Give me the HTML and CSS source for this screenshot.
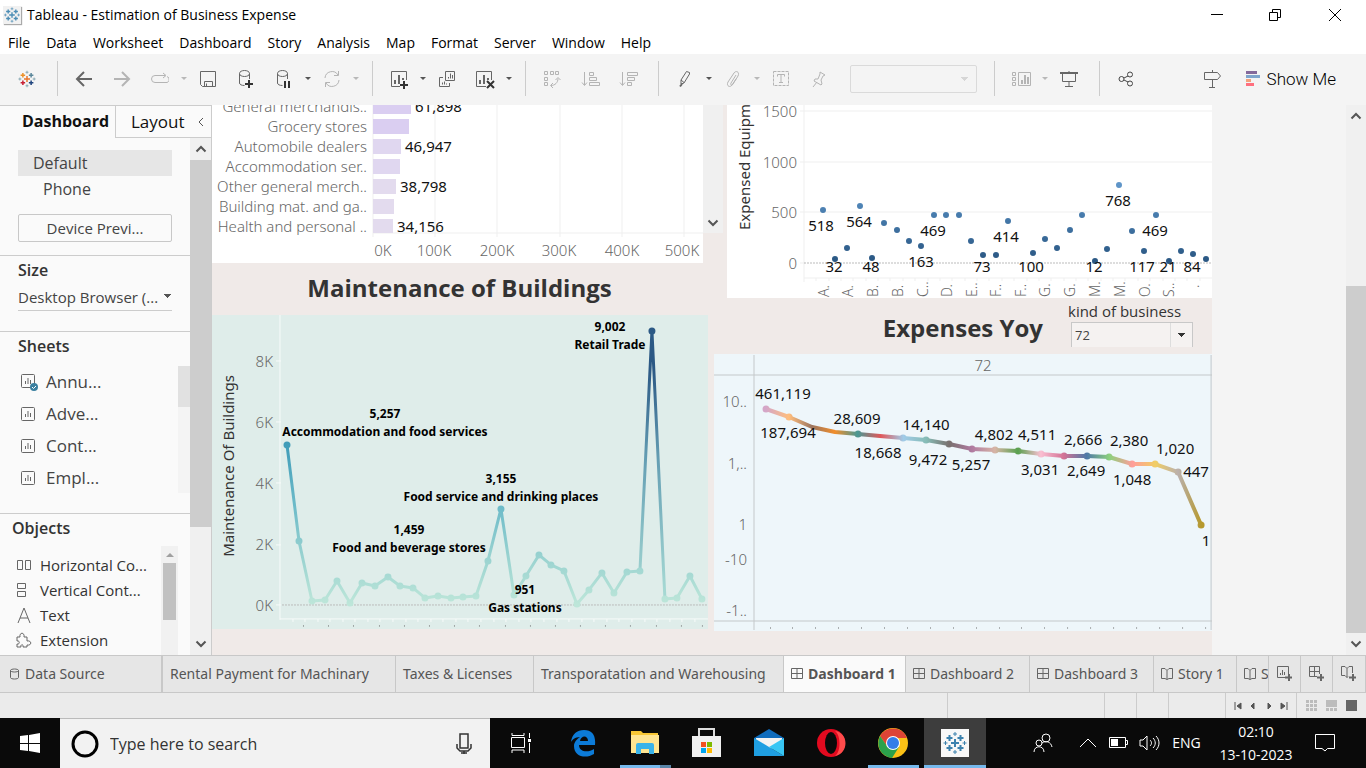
FILE: index.html
```html
<!DOCTYPE html>
<html lang="en">
<head>
<meta charset="utf-8">
<title>Tableau - Estimation of Business Expense</title>
<link rel="stylesheet" href="styles.css">
</head>
<body>
<svg class="defs" aria-hidden="true">
  <symbol id="plus-logo" viewBox="0 0 24 24">
    <path class="c1" d="M12 8v8M8 12h8"/>
    <path class="c2" d="M6.500 4v6M3.500 7h6"/>
    <path class="c3" d="M17.500 4v6M14.500 7h6"/>
    <path class="c4" d="M6.500 14v6M3.500 17h6"/>
    <path class="c5" d="M17.500 14v6M14.500 17h6"/>
    <path class="c6" d="M12 1v4M10 3h4M12 19v4M10 21h4M2.500 10v4M.5 12h4M21.500 10v4M19.500 12h4"/>
  </symbol>
  <symbol id="sheet" viewBox="0 0 14 14"><path d="M1.500.5h11a1 1 0 0 1 1 1v11a1 1 0 0 1-1 1h-11a1 1 0 0 1-1-1v-11a1 1 0 0 1 1-1zM4.500 7v3M7 4v6M9.500 6v4"/></symbol>
  <symbol id="grid" viewBox="0 0 12 12"><path d="M.5.5h11v10H.5zM6 .5v10M.5 5.500h11"/></symbol>
  <symbol id="book" viewBox="0 0 12 12"><path d="M6 2.500 4 .5H.5v10H4l2 1 2-1h3.500V.5H8zM6 2.500v9"/></symbol>
  <symbol id="up" viewBox="0 0 12 8"><path d="m1.500 6.500 4.500-4.500 4.500 4.500"/></symbol>
  <symbol id="down" viewBox="0 0 12 8"><path d="m1.500 1.500 4.500 4.500 4.500-4.500"/></symbol>
</svg>

<header class="titlebar">
  <svg class="app-icon" viewBox="-1 -1 26 26"><use href="#plus-logo" width="24" height="24"/></svg>
  <h1>Tableau - Estimation of Business Expense</h1>
  <div class="window-buttons">
    <button aria-label="Minimize"><svg width="12" height="12"><path d="M0 5.500h12"/></svg></button>
    <button aria-label="Restore"><svg width="12" height="12"><path d="M.5 3.500h8v8h-8zM3.500 3V.5h8v8H9"/></svg></button>
    <button aria-label="Close"><svg width="12" height="12"><path d="m0 0 12 12M12 0 0 12"/></svg></button>
  </div>
</header>

<nav class="menubar" aria-label="Menu">
  <button>File</button><button>Data</button><button>Worksheet</button><button>Dashboard</button><button>Story</button><button>Analysis</button><button>Map</button><button>Format</button><button>Server</button><button>Window</button><button>Help</button>
</nav>

<div class="toolbar" role="toolbar" aria-label="Toolbar">
  <button class="tool" aria-label="Start page"><svg class="logo-color" width="18" height="18"><use href="#plus-logo"/></svg></button>
  <span class="sep"></span>
  <button class="tool" aria-label="Undo"><svg width="18" height="16"><path class="heavy" d="M17 8H2M9 1 2 8l7 7"/></svg></button>
  <button class="tool off" aria-label="Redo"><svg width="18" height="16"><path class="heavy" d="M1 8h15M9 1l7 7-7 7"/></svg></button>
  <button class="tool off" aria-label="Replay"><svg width="18" height="14"><path d="M5 3.500H4a3 3 0 0 0 0 7h10a3 3 0 0 0 2-6M5 3.500h9M12 1l3 2.500L12 6"/></svg></button>
  <button class="caret off" aria-label="Replay options"></button>
  <button class="tool" aria-label="Save"><svg width="18" height="18"><path d="M1.500 1.500h15v15h-13l-2-2zM5.500 16v-4.500h8V16M7.500 13.500v3"/></svg></button>
  <button class="tool" aria-label="New data source"><svg width="16" height="20"><path d="M1.500 4.500c0-4 10-4 10 0s-10 4-10 0V14c0 1.500 2 2.500 5 2.500M11.500 4.500V10"/><path class="bold" d="M11 11v8M7 15h8"/></svg></button>
  <button class="tool" aria-label="Pause updates"><svg width="16" height="20"><path d="M1.500 4.500c0-4 10-4 10 0s-10 4-10 0V14c0 1.500 2 2.500 5 2.500M11.500 4.500V10"/><path class="bold" d="M9 12v7M13 12v7"/></svg></button>
  <button class="caret" aria-label="Pause options"></button>
  <button class="tool off" aria-label="Refresh"><svg width="18" height="18"><path d="M2 8a7 7 0 0 1 13-3M16 10a7 7 0 0 1-13 3M15.500 1v4.500H11M2.500 17v-4.500H7"/></svg></button>
  <button class="caret off" aria-label="Refresh options"></button>
  <span class="sep"></span>
  <button class="tool" aria-label="New worksheet"><svg width="20" height="20"><path d="M11 17.500H2.500v-15h15V11"/><path class="mid" d="M6 15v-4M10 15V6M14 11V9"/><path class="bold" d="M15 12v8M11 16h8"/></svg></button>
  <button class="caret" aria-label="New options"></button>
  <button class="tool" aria-label="Duplicate"><svg width="18" height="18"><path d="M7.500 1.500h9v9h-9zM5 7.500H1.500v9h10V13M10.500 8.500V7M12.500 8.500v-5M14.500 8.500V5M4.500 14.500v-2M6.500 14.500v-3M8.500 14.500v-1"/></svg></button>
  <button class="tool" aria-label="Clear sheet"><svg width="20" height="20"><path d="M11 17.500H1.500v-15h15V11"/><path class="mid" d="M5 15v-4M9 15V6M13 11V9"/><path class="bold" d="m12 12 7 7M19 12l-7 7"/></svg></button>
  <button class="caret" aria-label="Clear options"></button>
  <span class="sep"></span>
  <button class="tool off" aria-label="Swap rows and columns"><svg width="18" height="18"><path d="M1.500 1.500h3v3h-3zM7.500 1.500h3v3h-3zM12.500 1.500h3v3h-3zM1.500 7.500h3v3h-3zM1.500 12.500h3v3h-3zM8 15.500c4 0 7-3 7-7M12.500 10l2.500-2.500 2.500 2.500M10 13l-2.500 2.500L10 18"/></svg></button>
  <button class="tool off" aria-label="Sort ascending"><svg width="19" height="18"><path d="M3.500 2v13M1 12.500l2.500 3 2.500-3M8.500 2.500h4v3h-4zM8.500 7.500h7v3h-7zM8.500 12.500h10v3h-10z"/></svg></button>
  <button class="tool off" aria-label="Sort descending"><svg width="19" height="18"><path d="M3.500 2v13M1 12.500l2.500 3 2.500-3M8.500 2.500h10v3h-10zM8.500 7.500h7v3h-7zM8.500 12.500h4v3h-4z"/></svg></button>
  <span class="sep"></span>
  <button class="tool" aria-label="Highlight"><svg width="14" height="18"><path d="M8.500 1.500 3 10v4l3-1 5.500-9V2.500zM3 10l3 2.500"/><path class="heavy" d="M2 16.500 4 14"/></svg></button>
  <button class="caret" aria-label="Highlight options"></button>
  <button class="tool off" aria-label="Group"><svg width="14" height="18"><path d="m10 5-5 8c-1 2 1 3 2 1l5-8c2-4-2-6-4-3l-6 9c-2 4 2 6 4 3l4-6"/></svg></button>
  <button class="caret off" aria-label="Group options"></button>
  <button class="tool off" aria-label="Show labels"><svg width="18" height="18"><path stroke-dasharray="3 1" d="M1.500 1.500h15v14h-15z"/><path d="M5.500 6.500v-2h7v2M9 4.500v8M7 12.500h4"/></svg></button>
  <button class="tool off" aria-label="Fix axes"><svg width="14" height="18"><path d="m8 2 5 3-2 1-2 4 1 4-1 1-7-4 1-2h3l2-5zM5 12l-4 5"/></svg></button>
  <select class="fit" aria-label="Fit" disabled><option></option></select>
  <span class="sep"></span>
  <button class="tool off" aria-label="Show cards"><svg width="20" height="16"><path d="M1.500 1.500h3v3h-3zM1.500 6.500h3v3h-3zM1.500 11.500h3v3h-3zM7.500 1.500h12v13h-12z"/><path class="mid" d="M11 13V9M14 13V4M17 13V6"/></svg></button>
  <button class="caret off" aria-label="Card options"></button>
  <button class="tool" aria-label="Presentation mode"><svg width="18" height="16"><path class="mid" d="M0 2h18"/><path d="M2.500 2v8.500h13V2M9 10.500v5M5 15.500h8M9 0v2"/></svg></button>
  <span class="sep"></span>
  <button class="tool share" aria-label="Share"><svg width="16" height="16"><circle cx="3.500" cy="8" r="2.500"/><circle cx="12" cy="3.500" r="2.500"/><circle cx="12" cy="12.500" r="2.500"/><path d="m6 7 4-2M6 9l4 2"/></svg></button>
  <span class="spacer"></span>
  <button class="tool" aria-label="Guide"><svg width="18" height="18"><path d="M1.500 2.500h13l3 3.500-3 3.500h-13zM9.500 0v2M9.500 10v7M6 17.500h6"/></svg></button>
  <button class="showme"><svg width="14" height="16"><path fill="#84699b" d="M0 0h11v3H0z"/><path fill="#7fa5cd" d="M0 4h14v3H0z"/><path fill="#f3a27c" d="M0 8h5v3H0z"/><path fill="#ff6f7e" d="M0 12h8v3H0z"/></svg>Show Me</button>
</div>

<main class="workspace">
  <aside class="sidebar">
    <div class="side-tabs">
      <button class="side-tab active">Dashboard</button>
      <button class="side-tab">Layout<svg width="7" height="10"><path d="M6 1 2 5l4 4"/></svg></button>
    </div>
    <div class="side-body">
      <div class="side-content">
        <section class="devices">
          <button class="device selected">Default</button>
          <button class="device phone">Phone</button>
          <button class="preview">Device Previ...</button>
        </section>
        <section class="size">
          <h2><label for="size">Size</label></h2>
          <select id="size"><option>Desktop Browser (...</option></select>
        </section>
        <section class="sheets">
          <h2>Sheets</h2>
          <div class="scroll-list">
            <ul>
              <li><svg class="used" width="17" height="17"><use href="#sheet" width="14" height="14"/><circle cx="13" cy="13" r="4"/><path class="tick" d="m11 13 1.500 1.500L15 12"/></svg>Annu...</li>
              <li><svg width="17" height="14"><use href="#sheet" width="14" height="14"/></svg>Adve...</li>
              <li><svg width="17" height="14"><use href="#sheet" width="14" height="14"/></svg>Cont...</li>
              <li><svg width="17" height="14"><use href="#sheet" width="14" height="14"/></svg>Empl...</li>
            </ul>
            <div class="thin-track"><div></div></div>
          </div>
        </section>
        <section class="objects">
          <h2>Objects</h2>
          <div class="scroll-list">
            <ul>
              <li><svg width="16" height="16"><path d="M1.500 3.500h5v9h-5zM9.500 3.500h5v9h-5z"/></svg>Horizontal Co...</li>
              <li><svg width="16" height="16"><path d="M1.500 1.500h8v5h-8zM1.500 9.500h8v5h-8z"/></svg>Vertical Cont...</li>
              <li><svg width="16" height="16"><path d="M2 16 8 1l6 15M4 11h8"/></svg>Text</li>
              <li><svg width="16" height="16"><path d="M1 5h3c-1-5 5-5 4 0h3v4c5-1 5 5 0 4v2H7c1-3-3-3-2 0H1v-3c3 1 3-4 0-3z"/></svg>Extension</li>
            </ul>
            <div class="track"><i></i><div></div></div>
          </div>
        </section>
      </div>
      <div class="scrollbar side-scroll"><svg width="12" height="8"><use href="#up"/></svg><div class="thumb"></div><svg width="12" height="8"><use href="#down"/></svg></div>
    </div>
  </aside>

  <div class="canvas">
    <div class="dashboard">
      <div class="col left">
        <div class="bars">
          <svg class="chart white" viewBox="212 105 491 158" role="img" aria-label="Expense by kind of business">
            <path class="rule" d="M373 105v132M435 105v132M497 105v132M560 105v132M622 105v132M684 105v132M373 233h330"/>
            <g>
              <path fill="#dacef1" d="M373 99h38v15h-38z"/><path fill="#dacef1" d="M373 119h36v15h-36z"/><path fill="#e0d7f0" d="M373 139h28v15h-28z"/><path fill="#e0d7f0" d="M373 159h27v15h-27z"/><path fill="#e3dbee" d="M373 179h23v15h-23z"/><path fill="#e3dbee" d="M373 199h21v15h-21z"/><path fill="#e3dbee" d="M373 219h20v14h-20z"/>
            </g>
            <g class="axis end">
              <text x="367" y="112">General merchandis..</text><text x="367" y="132">Grocery stores</text><text x="367" y="152">Automobile dealers</text><text x="367" y="172">Accommodation ser..</text><text x="367" y="192">Other general merch..</text><text x="367" y="212">Building mat. and ga..</text><text x="367" y="232">Health and personal ..</text>
            </g>
            <g class="value"><text x="415" y="112">61,898</text><text x="405" y="152">46,947</text><text x="400" y="192">38,798</text><text x="397" y="232">34,156</text></g>
            <g class="axis center"><text x="383" y="256">0K</text><text x="434" y="256">100K</text><text x="497" y="256">200K</text><text x="559" y="256">300K</text><text x="622" y="256">400K</text><text x="682" y="256">500K</text></g>
          </svg>
          <div class="bars-scroll"><svg width="12" height="8"><use href="#down"/></svg></div>
        </div>
        <h2 class="zone-title">Maintenance of Buildings</h2>
        <svg class="chart mint" viewBox="212 315 496 314" role="img" aria-label="Maintenance of buildings">
          <defs><linearGradient id="depth" gradientUnits="userSpaceOnUse" x1="0" y1="604" x2="0" y2="331"><stop offset="0" stop-color="#bde6d9"/><stop offset=".15" stop-color="#9ed5d1"/><stop offset=".35" stop-color="#6fbcc9"/><stop offset=".58" stop-color="#419db9"/><stop offset="1" stop-color="#2c5985"/></linearGradient>
          <linearGradient id="depth-tall" gradientUnits="userSpaceOnUse" x1="0" y1="590" x2="0" y2="331"><stop offset="0" stop-color="#a5d8d3"/><stop offset=".5" stop-color="#659fb4"/><stop offset=".85" stop-color="#2c5985"/></linearGradient></defs>
          <path class="light" d="M280 315v305M276 361h5M276 422h5M276 483h5M276 545h5M276 605h5M280 619h428M293 619v3M305 619v3M318 619v3M330 619v3M343 619v3M355 619v3M368 619v3M380 619v3M393 619v3M406 619v3M418 619v3M431 619v3M443 619v3M456 619v3M468 619v3M481 619v3M494 619v3M506 619v3M519 619v3M531 619v3M544 619v3M557 619v3M569 619v3M582 619v3M594 619v3M607 619v3M619 619v3M632 619v3M645 619v3M657 619v3M670 619v3M682 619v3M695 619v3"/>
          <path class="zero" d="M282 605h426"/>
          <path class="line" stroke="url(#depth)" d="M287 445 299 541 312 601 325 600 337 581 350 603 362 583 375 586 388 577 400 586 413 588 425 598 438 596 451 598 463 597 476 596 488 561 501 509 514 595 526 576 539 555 551 565 564 571 577 604 589 590 602 573 614 593 627 572 640 571"/>
          <path class="line" stroke="url(#depth-tall)" d="M640 571 652 331 665 599"/>
          <path class="line" stroke="url(#depth)" d="M665 599 677 598 690 576 702 599"/>
          <path class="dots" stroke="url(#depth)" d="M287 445h0M299 541h0M312 601h0M325 600h0M337 581h0M350 603h0M362 583h0M375 586h0M388 577h0M400 586h0M413 588h0M425 598h0M438 596h0M451 598h0M463 597h0M476 596h0M488 561h0M501 509h0M514 595h0M526 576h0M539 555h0M551 565h0M564 571h0M577 604h0M589 590h0M602 573h0M614 593h0M627 572h0M640 571h0M652 331h0M665 599h0M677 598h0M690 576h0M702 599h0"/>
          <g class="axis end"><text x="273" y="367">8K</text><text x="273" y="428">6K</text><text x="273" y="489">4K</text><text x="273" y="550">2K</text><text x="273" y="611">0K</text></g>
          <text class="axis-title" transform="translate(234 466) rotate(-90)">Maintenance Of Buildings</text>
          <g class="callout">
            <text x="610" y="331">9,002</text><text x="610" y="349">Retail Trade</text>
            <text x="385" y="418">5,257</text><text x="385" y="436">Accommodation and food services</text>
            <text x="501" y="483">3,155</text><text x="501" y="501">Food service and drinking places</text>
            <text x="409" y="534">1,459</text><text x="409" y="552">Food and beverage stores</text>
            <text x="525" y="594">951</text><text x="525" y="612">Gas stations</text>
          </g>
          <path class="specks" d="M303 626h1M328 626h1M353 626h1M379 626h1M404 626h1M429 626h1M454 626h1M479 626h1M505 626h1M530 626h1M555 626h1M580 626h1M605 626h1M630 626h1M656 626h1M681 626h1M702 626h1"/>
        </svg>
      </div>

      <div class="col right">
        <svg class="chart white" viewBox="727 105 485 193" role="img" aria-label="Expensed equipment">
          <defs><linearGradient id="blues" gradientUnits="userSpaceOnUse" x1="0" y1="261" x2="0" y2="185"><stop offset="0" stop-color="#2a5783"/><stop offset=".6" stop-color="#477bac"/><stop offset="1" stop-color="#5f95c8"/></linearGradient></defs>
          <path class="rule" d="M804 105v177M800 111h412M800 162h412M800 212h412M800 263h5M804 278h408M816 278v3M829 278v3M841 278v3M853 278v3M866 278v3M878 278v3M890 278v3M903 278v3M915 278v3M928 278v3M940 278v3M952 278v3M965 278v3M977 278v3M989 278v3M1002 278v3M1014 278v3M1027 278v3M1039 278v3M1051 278v3M1064 278v3M1076 278v3M1088 278v3M1101 278v3M1113 278v3M1125 278v3M1138 278v3M1150 278v3M1163 278v3M1175 278v3M1187 278v3M1200 278v3"/>
          <path class="zero" d="M804 263h408"/>
          <path class="dots small" stroke="url(#blues)" d="M823 210h0M835 259h0M847 248h0M860 206h0M872 258h0M884 223h0M897 230h0M909 241h0M921 246h0M934 215h0M946 215h0M959 215h0M971 241h0M983 255h0M996 255h0M1008 221h0M1033 253h0M1045 239h0M1057 248h0M1070 230h0M1082 215h0M1095 261h0M1107 249h0M1119 185h0M1132 231h0M1144 251h0M1156 215h0M1169 261h0M1181 251h0M1193 254h0M1206 259h0"/>
          <g class="axis end"><text x="797" y="117">1500</text><text x="797" y="168">1000</text><text x="797" y="218">500</text><text x="797" y="269">0</text></g>
          <text class="axis-title start" transform="translate(750 230) rotate(-90)">Expensed Equipment</text>
          <g class="value center"><text x="821" y="231">518</text><text x="834" y="272">32</text><text x="859" y="227">564</text><text x="871" y="272">48</text><text x="921" y="267">163</text><text x="933" y="236">469</text><text x="982" y="272">73</text><text x="1006" y="242">414</text><text x="1031" y="272">100</text><text x="1094" y="272">12</text><text x="1118" y="206">768</text><text x="1142" y="272">117</text><text x="1155" y="236">469</text><text x="1168" y="272">21</text><text x="1192" y="272">84</text></g>
          <g class="axis ticks"><text transform="translate(829 297) rotate(-90)">A.</text><text transform="translate(853 297) rotate(-90)">A.</text><text transform="translate(878 297) rotate(-90)">B.</text><text transform="translate(903 297) rotate(-90)">B.</text><text transform="translate(928 297) rotate(-90)">C..</text><text transform="translate(952 297) rotate(-90)">D.</text><text transform="translate(977 297) rotate(-90)">E..</text><text transform="translate(1001 297) rotate(-90)">F..</text><text transform="translate(1026 297) rotate(-90)">F..</text><text transform="translate(1050 297) rotate(-90)">G.</text><text transform="translate(1075 297) rotate(-90)">G.</text><text transform="translate(1100 297) rotate(-90)">M.</text><text transform="translate(1125 297) rotate(-90)">M.</text><text transform="translate(1150 297) rotate(-90)">O.</text><text transform="translate(1174 297) rotate(-90)">S..</text><text transform="translate(1199 288) rotate(-90)">.</text></g>
        </svg>
        <div class="yoy-head">
          <h2 class="zone-title">Expenses Yoy</h2>
          <div class="filter"><label for="kind">kind of business</label><select id="kind"><option>72</option></select></div>
        </div>
        <svg class="chart ice" viewBox="714 354 498 277" role="img" aria-label="Expenses year over year">
          <defs><linearGradient id="kinds" gradientUnits="userSpaceOnUse" x1="766" y1="0" x2="1201" y2="0"><stop offset="0%" stop-color="#d4a6c8"/><stop offset="5.26%" stop-color="#ffbe7d"/><stop offset="10.53%" stop-color="#9c755f"/><stop offset="15.79%" stop-color="#f28e2b"/><stop offset="21.05%" stop-color="#499894"/><stop offset="26.32%" stop-color="#e15759"/><stop offset="31.58%" stop-color="#a0cbe8"/><stop offset="36.84%" stop-color="#86bcb6"/><stop offset="42.11%" stop-color="#79706e"/><stop offset="47.37%" stop-color="#b07aa1"/><stop offset="52.63%" stop-color="#d7b5a6"/><stop offset="57.89%" stop-color="#59a14f"/><stop offset="63.16%" stop-color="#fabfd2"/><stop offset="68.42%" stop-color="#d37295"/><stop offset="73.68%" stop-color="#4e79a7"/><stop offset="78.95%" stop-color="#8cd17d"/><stop offset="84.21%" stop-color="#ff9d9a"/><stop offset="89.47%" stop-color="#f1ce63"/><stop offset="94.74%" stop-color="#bab0ac"/><stop offset="100%" stop-color="#b6992d"/></linearGradient></defs>
          <path class="frame" d="M714 375h498M714 621h498M754 355v275M1211 355v275"/>
          <path class="line thick" stroke="url(#kinds)" d="M766 409 789 417 812 427 835 432 858 434 880 436 903 438 926 440 949 444 972 449 995 450 1018 451 1041 454 1064 456 1087 456 1109 457 1132 464 1155 464 1178 472 1201 525"/>
          <path class="dots" stroke="url(#kinds)" d="M766 409h0M789 417h0M858 434h0M903 438h0M926 440h0M949 444h0M972 449h0M995 450h0M1018 451h0M1041 454h0M1064 456h0M1087 456h0M1109 457h0M1132 464h0M1155 464h0M1178 472h0M1201 525h0"/>
          <g class="axis end"><text x="747" y="407">10..</text><text x="747" y="469">1,..</text><text x="747" y="530">1</text><text x="747" y="565">-10</text><text x="747" y="616">-1..</text></g>
          <g class="axis center"><text x="983" y="371">72</text></g>
          <g class="value center"><text x="783" y="399">461,119</text><text x="788" y="438">187,694</text><text x="857" y="424">28,609</text><text x="878" y="458">18,668</text><text x="926" y="430">14,140</text><text x="928" y="465">9,472</text><text x="971" y="470">5,257</text><text x="994" y="440">4,802</text><text x="1037" y="440">4,511</text><text x="1040" y="475">3,031</text><text x="1083" y="445">2,666</text><text x="1086" y="476">2,649</text><text x="1129" y="446">2,380</text><text x="1132" y="485">1,048</text><text x="1175" y="454">1,020</text><text x="1196" y="477">447</text><text x="1206" y="546">1</text></g>
          <path class="specks" d="M770 628h1M792 628h1M815 628h1M838 628h1M861 628h1M884 628h1M907 628h1M930 628h1M953 628h1M976 628h1M999 628h1M1021 628h1M1044 628h1M1067 628h1M1090 628h1M1113 628h1M1136 628h1M1159 628h1M1182 628h1M1205 628h1"/>
        </svg>
      </div>
    </div>
    <div class="scrollbar main-scroll"><svg width="12" height="8"><use href="#up"/></svg><div class="thumb"></div><svg width="12" height="8"><use href="#down"/></svg></div>
  </div>
</main>

<nav class="sheet-tabs" aria-label="Sheets">
  <button class="source"><svg width="10" height="12"><path d="M.5 2.500c0-2 8-2 8 0v7c0 2-8 2-8 0zM.5 2.500c0 2 8 2 8 0"/></svg>Data Source</button>
  <button>Rental Payment for Machinary</button>
  <button>Taxes &amp; Licenses</button>
  <button>Transporatation and Warehousing</button>
  <button class="current"><svg width="12" height="12"><use href="#grid"/></svg>Dashboard 1</button>
  <button><svg width="12" height="12"><use href="#grid"/></svg>Dashboard 2</button>
  <button><svg width="12" height="12"><use href="#grid"/></svg>Dashboard 3</button>
  <button><svg width="12" height="12"><use href="#book"/></svg>Story 1</button>
  <button><svg width="12" height="12"><use href="#book"/></svg>Story 2</button>
  <button class="add" aria-label="New worksheet"><svg width="16" height="16"><path d="M8 11.500H.5V.5h11V8M3.500 9V7M5.500 9V4M7.500 9V6"/><path class="mid" d="M12 8v7M8 11.500h7"/></svg></button>
  <button class="add" aria-label="New dashboard"><svg width="16" height="16"><path d="M8 10.500H.5V.5h10V8M5.500 1v9M1 5.500h9"/><path class="mid" d="M12 8v7M8 11.500h7"/></svg></button>
  <button class="add" aria-label="New story"><svg width="16" height="16"><path d="M6 2.500 4 .5H.5v9H4l2 2 1-1M6 2.500l2-2h3.500V7M6 2.500v9"/><path class="mid" d="M12 8v7M8 11.500h7"/></svg></button>
</nav>

<footer class="status">
  <span></span><span></span><span></span><span></span><span></span>
  <div class="pager">
    <button aria-label="First"><svg width="8" height="8"><path d="M1 0v8M7 1v6L3 4z"/></svg></button><button aria-label="Previous"><svg width="8" height="8"><path d="M5 1v6L2 4z"/></svg></button><button aria-label="Next"><svg width="8" height="8"><path d="M3 1v6l3-3z"/></svg></button><button aria-label="Last"><svg width="8" height="8"><path d="M7 0v8M1 1v6l4-3z"/></svg></button>
  </div>
  <div class="views">
    <button aria-label="Sheet sorter"><svg width="11" height="11"><path fill="#bcbcbc" d="M0 0h3v3H0zM4 0h3v3H4zM8 0h3v3H8zM0 4h3v3H0zM4 4h3v3H4zM8 4h3v3H8zM0 8h3v3H0zM4 8h3v3H4zM8 8h3v3H8z"/></svg></button><button aria-label="Filmstrip"><svg width="11" height="11"><path fill="#bcbcbc" d="M0 0h11v7H0zM0 8h3v3H0zM4 8h3v3H4zM8 8h3v3H8z"/></svg></button><button aria-label="Tabs"><svg width="11" height="11"><path fill="#666" d="M0 0h11v11H0z"/></svg></button>
  </div>
</footer>

<div class="taskbar">
  <button class="start" aria-label="Start"><svg width="20" height="20"><path fill="#fff" d="m0 3 8-1v8H0zM9 2l11-2v10H9zM0 11h8v7l-8-1zM9 11h11v9L9 18z"/></svg></button>
  <div class="search">
    <svg width="28" height="28"><circle cx="14" cy="14" r="12" fill="none" stroke="#000" stroke-width="3"/></svg>
    <input type="text" placeholder="Type here to search" aria-label="Type here to search">
    <svg width="16" height="22"><path fill="none" stroke="#333" stroke-width="1.500" d="M4 1h8v14H4zM1 11v4l3 3h8l3-3v-4M8 18v3M5 20h6"/></svg>
  </div>
  <button class="app" aria-label="Task view"><svg width="20" height="20"><path fill="none" stroke="#fff" d="M.5 4.500h13v10H.5zM1 0v2.500h12V0M1 20v-3h12v3M18.500 0v5M18.500 10v10"/><path fill="#fff" d="M17 6h3v3h-3z"/></svg></button>
  <button class="app" aria-label="Edge"><svg width="26" height="28"><path fill="#0c7bd8" d="M1 13C2 5 7 1 14 1c8 0 12 5 11 15H9c0 7 9 8 15 4v5c-8 5-20 3-20-8 0-4 3-7 6-9-5 0-8 3-9 5zm9-1h8c0-6-7-6-8 0z"/></svg></button>
  <button class="app running grouped" aria-label="File Explorer"><svg width="28" height="26"><path fill="#f8c735" d="M0 1h10l2 2h15v4H0z"/><path fill="#ffe592" d="M0 5h28v18H0z"/><path fill="#3ab3ea" d="M5 15q0-2 2-2h14q2 0 2 2v9h-5v-5h-8v5H5z"/></svg></button>
  <button class="app" aria-label="Microsoft Store"><svg width="30" height="30"><path fill="none" stroke="#ddd" stroke-width="2" d="M7 9V1h15v8"/><path fill="#f0f0f0" d="M0 8h29v21H0z"/><path fill="#f25022" d="M9 14h5v5H9z"/><path fill="#7fba00" d="M15 14h5v5h-5z"/><path fill="#00a4ef" d="M9 20h5v5H9z"/><path fill="#ffb900" d="M15 20h5v5h-5z"/></svg></button>
  <button class="app" aria-label="Mail"><svg width="30" height="28"><path fill="#0f6cbd" d="M15 0 30 9v4H0V9z"/><path fill="#f3f3f3" d="M2 9h26v8l-13 3L2 17z"/><path fill="#1f9fe2" d="m0 9 30 18H0z"/><path fill="#38c6f4" d="M30 9v18L15 18z"/></svg></button>
  <button class="app" aria-label="Opera"><svg width="29" height="29"><ellipse cx="14" cy="14" rx="14" ry="14" fill="#e20a1f"/><path fill="#ff4b4b" d="M18 2c14 2 14 22 0 25 6-4 6-21 0-25z"/><ellipse cx="14" cy="14" rx="6" ry="11" fill="#0a0a0a"/></svg></button>
  <button class="app running" aria-label="Chrome"><svg width="30" height="30"><circle cx="15" cy="15" r="15" fill="#fbc116"/><path fill="#dd4436" d="M2 8a15 15 0 0 1 27 2H15l-6 8z"/><path fill="#2ba14b" d="M2 8a15 15 0 0 0 12 22l7-11-12-1z"/><circle cx="15" cy="15" r="7" fill="#fff"/><circle cx="15" cy="15" r="6" fill="#347de8"/></svg></button>
  <button class="app open" aria-label="Tableau"><svg class="tile" width="28" height="28" viewBox="-2 -2 28 28"><use href="#plus-logo" width="24" height="24"/></svg></button>
  <span class="spacer"></span>
  <div class="tray">
    <button class="t-people" aria-label="People"><svg width="20" height="20"><circle cx="13" cy="5" r="4"/><circle cx="6" cy="10" r="3"/><path d="M1 19c0-7 10-7 10 0M9 10c4-3 9-1 10 4"/></svg></button>
    <button class="t-more" aria-label="Hidden icons"><svg width="18" height="10"><path d="m1 9 8-8 8 8"/></svg></button>
    <button class="t-power" aria-label="Battery"><svg width="20" height="12"><path d="M.5.5h16v10H.5zM17 3.500h1.500v4H17"/><path fill="#fff" stroke="none" d="M2 2h7v7H2z"/></svg></button>
    <button class="t-volume" aria-label="Volume"><svg width="22" height="18"><path d="M1 6h3l4-4v14l-4-4H1zM11 6c2 2 2 4 0 6M14 4c3 3 3 7 0 10M17 2c4 4 4 10 0 14"/></svg></button>
    <button class="t-lang">ENG</button>
    <button class="t-clock"><span>02:10</span><span>13-10-2023</span></button>
    <button class="t-notes" aria-label="Notifications"><svg width="20" height="20"><path d="M.5 1.500h19v14h-7L10 18l-3-2.500H.5z"/></svg></button>
  </div>
</div>
</body>
</html>
```
FILE: styles.css
```css
* { box-sizing: border-box; }

body {
  margin: 0;
  height: 100vh;
  display: flex;
  flex-direction: column;
  overflow: hidden;
  background: #fff;
  color: #000;
  font: 15px/20px "Open Sans", "Noto Sans", sans-serif;
}

button {
  margin: 0;
  padding: 0;
  border: 0;
  background: none;
  color: inherit;
  font: inherit;
}

h1, h2, ul { margin: 0; padding: 0; font: inherit; list-style: none; }
svg { display: block; flex: none; fill: none; stroke: none; }
.defs { position: absolute; width: 0; height: 0; }
.spacer { flex: 1; }

/* Window frame */
.titlebar { flex: none; display: flex; align-items: center; height: 30px; padding-left: 3px; }
.titlebar h1 { font-size: 14px; margin-left: 6px; }
.app-icon { width: 18px; height: 18px; background: #f1f1f1; box-shadow: 1px 1px 1px #aaa; color: #4b8db5; stroke-width: 2px; }
.window-buttons { display: flex; margin-left: auto; }
.window-buttons button { width: 58px; height: 28px; display: grid; place-items: center; }
.window-buttons button:last-child { width: 62px; }
.window-buttons svg { stroke: #000; }
.menubar { flex: none; display: flex; height: 24px; padding-top: 2px; }
.menubar button { padding: 0 8px; font-size: 14px; }

/* Tableau mark: each cross can take its own colour */
.c1 { stroke: var(--c1, currentColor); }
.c2 { stroke: var(--c2, currentColor); }
.c3 { stroke: var(--c3, currentColor); }
.c4 { stroke: var(--c4, currentColor); }
.c5 { stroke: var(--c5, currentColor); }
.c6 { stroke: var(--c6, currentColor); stroke-width: 1px; }
.logo-color {
  --c1: #e8762d;
  --c2: #eb9129;
  --c3: #5b879b;
  --c4: #c72035;
  --c5: #1f447e;
  --c6: #7199a6;
  stroke-width: 2px;
}

/* Toolbar */
.toolbar { flex: none; display: flex; align-items: center; height: 51px; padding: 0 30px 2px 8px; background: #f4f4f4; }
.tool { width: 38px; height: 38px; display: grid; place-items: center; flex: none; }
.tool svg { stroke: #666; }
.tool.off svg { stroke: #b4b4b4; }
.tool .mid, .tool .heavy { stroke-width: 2px; }
.tool .bold { stroke: #333; stroke-width: 2px; }
.tool.share svg { stroke: #444; }
.caret { width: 10px; height: 38px; display: grid; place-items: center; flex: none; }
.caret::before { content: ""; border: 3px solid transparent; border-top-color: #555; border-bottom: 0; }
.caret.off::before { border-top-color: #b8b8b8; }
.sep { width: 1px; height: 35px; margin: 0 7px 0 11px; background: #ccc; flex: none; }
.fit {
  appearance: none;
  width: 127px;
  height: 28px;
  margin: 0 6px 0 12px;
  border: 1px solid #d0d0d0;
  border-radius: 2px;
  background:
    linear-gradient(45deg, transparent 50%, #cacaca 50%) 107px 9px / 4px 4px no-repeat,
    linear-gradient(135deg, #cacaca 50%, transparent 50%) 111px 9px / 4px 4px no-repeat;
  background:
    linear-gradient(to top right, transparent 50%, #cacaca 50%) 110px 11px / 4px 4px no-repeat,
    linear-gradient(to bottom right, #cacaca 50%, transparent 50%) 114px 11px / 4px 4px no-repeat;
}
.showme { display: flex; align-items: center; gap: 7px; margin-left: 15px; font: 300 17px/24px Roboto, sans-serif; white-space: nowrap; }

/* Workspace */
.workspace { flex: 1; display: flex; min-height: 0; }
.sidebar { flex: none; width: 212px; display: flex; flex-direction: column; background: #fafafa; border-right: 1px solid #ccc; color: #333; }
.side-tabs { display: flex; flex: none; height: 33px; border-top: 1px solid #ccc; }
.side-tab { font-size: 17px; line-height: 24px; color: #111; }
.side-tab.active { width: 115px; padding: 0 0 2px 16px; font-size: 16px; font-weight: 700; }
.side-tab:not(.active) { flex: 1; display: flex; align-items: center; justify-content: space-between; padding: 0 7px 0 15px; border-left: 1px solid #ccc; border-bottom: 1px solid #ccc; }
.side-tab svg { stroke: #555; }
.side-body { flex: 1; display: flex; min-height: 0; }
.side-content { flex: 1; min-width: 0; overflow: hidden; }
.side-content section { border-bottom: 1px solid #ccc; }
.side-content h2 { font-size: 16px; font-weight: 600; line-height: 24px; }
.devices { height: 118px; padding: 12px 18px 0; display: flex; flex-direction: column; align-items: stretch; }
.device { height: 26px; padding-left: 15px; text-align: left; font: 16px/26px "Open Sans", sans-serif; color: #444; }
.device.selected { background: #e6e6e6; }
.device.phone { padding-left: 25px; }
.preview { height: 28px; margin-top: 12px; border: 1px solid #c8c8c8; border-radius: 2px; font-size: 15px; color: #444; }
.size { height: 76px; padding: 2px 18px 0; }
.size select {
  width: 100%;
  height: 27px;
  margin-top: 2px;
  padding: 0;
  appearance: none;
  border: 0;
  border-bottom: 1px solid #ccc;
  background:
    linear-gradient(to top right, transparent 50%, #555 50%) 146px 10px / 4px 4px no-repeat,
    linear-gradient(to bottom right, #555 50%, transparent 50%) 150px 10px / 4px 4px no-repeat;
  color: #444;
  font: 15px/24px "Open Sans", sans-serif;
}
.sheets { height: 182px; }
.sheets h2 { padding: 2px 18px 0; }
.sheets ul { flex: 1; }
.sheets .scroll-list { margin-top: 8px; height: 127px; }
.scroll-list { display: flex; }
.sheets li { display: flex; align-items: center; gap: 8px; height: 32px; padding-left: 21px; font-size: 17px; color: #444; }
.sheets li svg { stroke: #666; }
.used circle { fill: #3a7f9f; stroke: none; }
.used .tick { stroke: #fff; }
.thin-track { width: 12px; background: #f4f4f4; }
.thin-track div { height: 41px; background: #e1e1e1; }
.objects h2 { padding: 2px 12px 0; }
.side-content .objects { border: 0; }
.objects .scroll-list { margin-top: 6px; height: 110px; padding-right: 12px; }
.objects ul { flex: 1; padding-top: 6px; }
.objects li { display: flex; align-items: center; gap: 8px; height: 25px; padding-left: 16px; font-size: 15px; white-space: nowrap; }
.objects li svg { stroke: #666; }
.track { width: 17px; padding-top: 7px; background: #f1f1f1; display: flex; flex-direction: column; align-items: center; gap: 6px; }
.track i { border: 4px solid transparent; border-top: 0; border-bottom-color: #a0a0a0; }
.track div { width: 13px; height: 57px; background: #c1c1c1; }
.scrollbar { flex: none; width: 20px; display: flex; flex-direction: column; justify-content: space-between; align-items: center; background: #f0f0f0; padding: 7px 0; }
.side-scroll { width: 21px; }
.scrollbar svg, .bars-scroll svg { stroke: #555; stroke-width: 2px; }
.scrollbar .thumb { width: 100%; background: #cdcdcd; }
.side-scroll .thumb { height: 367px; margin: 7px 0 auto; }
.main-scroll .thumb { height: 347px; margin: auto 0 7px; }

/* Dashboard */
.canvas { flex: 1; min-width: 0; display: flex; justify-content: space-between; background: #f4f4f4; }
.dashboard { flex: 0 1 1000px; display: flex; overflow: hidden; background: #f0eae8; }
.left { flex: 515; min-width: 0; }
.right { flex: 485; min-width: 0; }
.chart { width: 100%; height: auto; font: 15px "Noto Sans", "Open Sans", sans-serif; }
.bars { display: grid; grid-template-columns: 491fr 24fr; }
.bars-scroll { height: 128px; width: 20px; padding: 0 0 6px 4px; display: flex; align-items: flex-end; background: #f0f0f0; }
.white { background: #fff; }
.mint { background: #dfedea; }
.left .mint { width: 96.3%; }
.ice { background: #eef6fa; }
.right .ice { width: 102.7%; margin-left: -2.7%; }
.zone-title { height: 52px; padding-right: 20px; text-align: center; color: #333; font-size: 24px; line-height: 50px; font-weight: 700; }
.yoy-head { display: flex; justify-content: flex-end; height: 56px; padding-right: 19px; }
.yoy-head .zone-title { padding: 5px 25px 0 0; }
.filter { display: flex; flex-direction: column; width: 125px; color: #333; }
.filter label { line-height: 18px; padding-top: 4px; font-size: 15px; white-space: nowrap; }
.filter select {
  appearance: none;
  width: 122px;
  height: 25px;
  margin: 2px 0 0 3px;
  padding: 0 3px;
  border: 1px solid #c8c8c8;
  border-bottom: 0;
  background:
    linear-gradient(to top right, transparent 50%, #333 50%) 106px 10px / 4px 4px no-repeat,
    linear-gradient(to bottom right, #333 50%, transparent 50%) 110px 10px / 4px 4px no-repeat,
    linear-gradient(#ddd, #ddd) 98px 0 / 1px 25px no-repeat,
    #f5f2f1;
  color: #444;
  font: 13px/20px "Open Sans", sans-serif;
}
.rule { stroke: #efefef; }
.light { stroke: #f8fbfa; }
.zero { stroke: #bbb; stroke-dasharray: 2 1; }
.frame { stroke: #c4c8ca; }
.line { stroke-width: 3px; stroke-linejoin: round; }
.thick { stroke-width: 4px; }
.dots { stroke-width: 7px; stroke-linecap: round; }
.dots.small { stroke-width: 6px; }
.specks { stroke: #666; }
.axis { fill: #666; font-weight: 300; }
.value { fill: #111; }
.end { text-anchor: end; }
.center, .callout { text-anchor: middle; }
.ticks { font-size: 14px; }
.axis-title { fill: #333; font-size: 15px; text-anchor: middle; }
.axis-title.start { text-anchor: start; }
.callout { fill: #000; font-size: 12px; font-weight: 700; }

/* Sheet tabs and status */
.sheet-tabs {
  flex: none;
  display: grid;
  grid-template-columns: 163px 233px 138px 250px 122px 124px 124px 83px 1fr 32px 32px 33px;
  height: 38px;
  border: solid #c8c8c8;
  border-width: 1px 0;
  background: #e6e6e6;
  color: #555;
}
.sheet-tabs button { display: flex; align-items: center; gap: 5px; min-width: 0; padding: 0 7px; overflow: hidden; border-right: 1px solid #c8c8c8; font: 14px/20px "Noto Sans", "Open Sans", sans-serif; white-space: nowrap; }
.sheet-tabs .source { padding-left: 10px; border-right-width: 2px; }
.sheet-tabs .current { background: #fafafa; font-family: "Open Sans", sans-serif; font-weight: 700; }
.sheet-tabs .add { padding-left: 8px; }
.sheet-tabs svg { stroke: #666; }
.sheet-tabs .mid { stroke-width: 2px; }
.status { flex: none; display: grid; grid-template-columns: 1fr 157px 32px 32px 57px 71px 69px; height: 25px; background: #ebebeb; }
.status span, .pager { border-right: 1px solid #ccc; }
.pager, .views { display: flex; align-items: center; justify-content: space-evenly; }
.pager svg { fill: #555; }
.pager svg path { stroke: #555; stroke-width: 1px; }

/* Taskbar */
.taskbar { flex: none; display: flex; height: 50px; background: #0a0a0a; color: #fff; }
.start { width: 60px; display: grid; place-items: center; }
.search { width: 430px; display: flex; align-items: center; gap: 11px; padding: 0 18px 0 11px; background: #f2f2f2; border-top: 1px solid #bbb; }
.search input { flex: 1; min-width: 0; border: 0; padding: 0; background: none; font: 16px/22px "Open Sans", "Noto Sans", sans-serif; }
.search input::placeholder { color: #333; opacity: 1; }
.app { width: 62px; display: grid; place-items: center; }
.running { background: linear-gradient(#76b9ed, #76b9ed) center bottom / 51px 3px no-repeat; }
.grouped { background: linear-gradient(90deg, #76b9ed 78%, #5a85a8 78%) center bottom / 51px 3px no-repeat; }
.open { background: linear-gradient(#76b9ed, #76b9ed) center bottom / 100% 3px no-repeat, #3d3d3d; }
.tile { background: #f8f8f8; color: #3d82ae; stroke-width: 2px; }
.tray { display: flex; }
.tray button { display: grid; place-items: center; }
.tray svg { stroke: #fff; stroke-width: 1px; }
.t-people { width: 58px; }
.t-more { width: 32px; }
.t-power { width: 30px; }
.t-volume { width: 31px; }
.tray .t-lang { width: 43px; font-size: 14px; }
.tray .t-clock { width: 96px; align-content: center; row-gap: 3px; font-size: 14px; }
.tray .t-notes { width: 62px; padding-right: 20px; }
```
